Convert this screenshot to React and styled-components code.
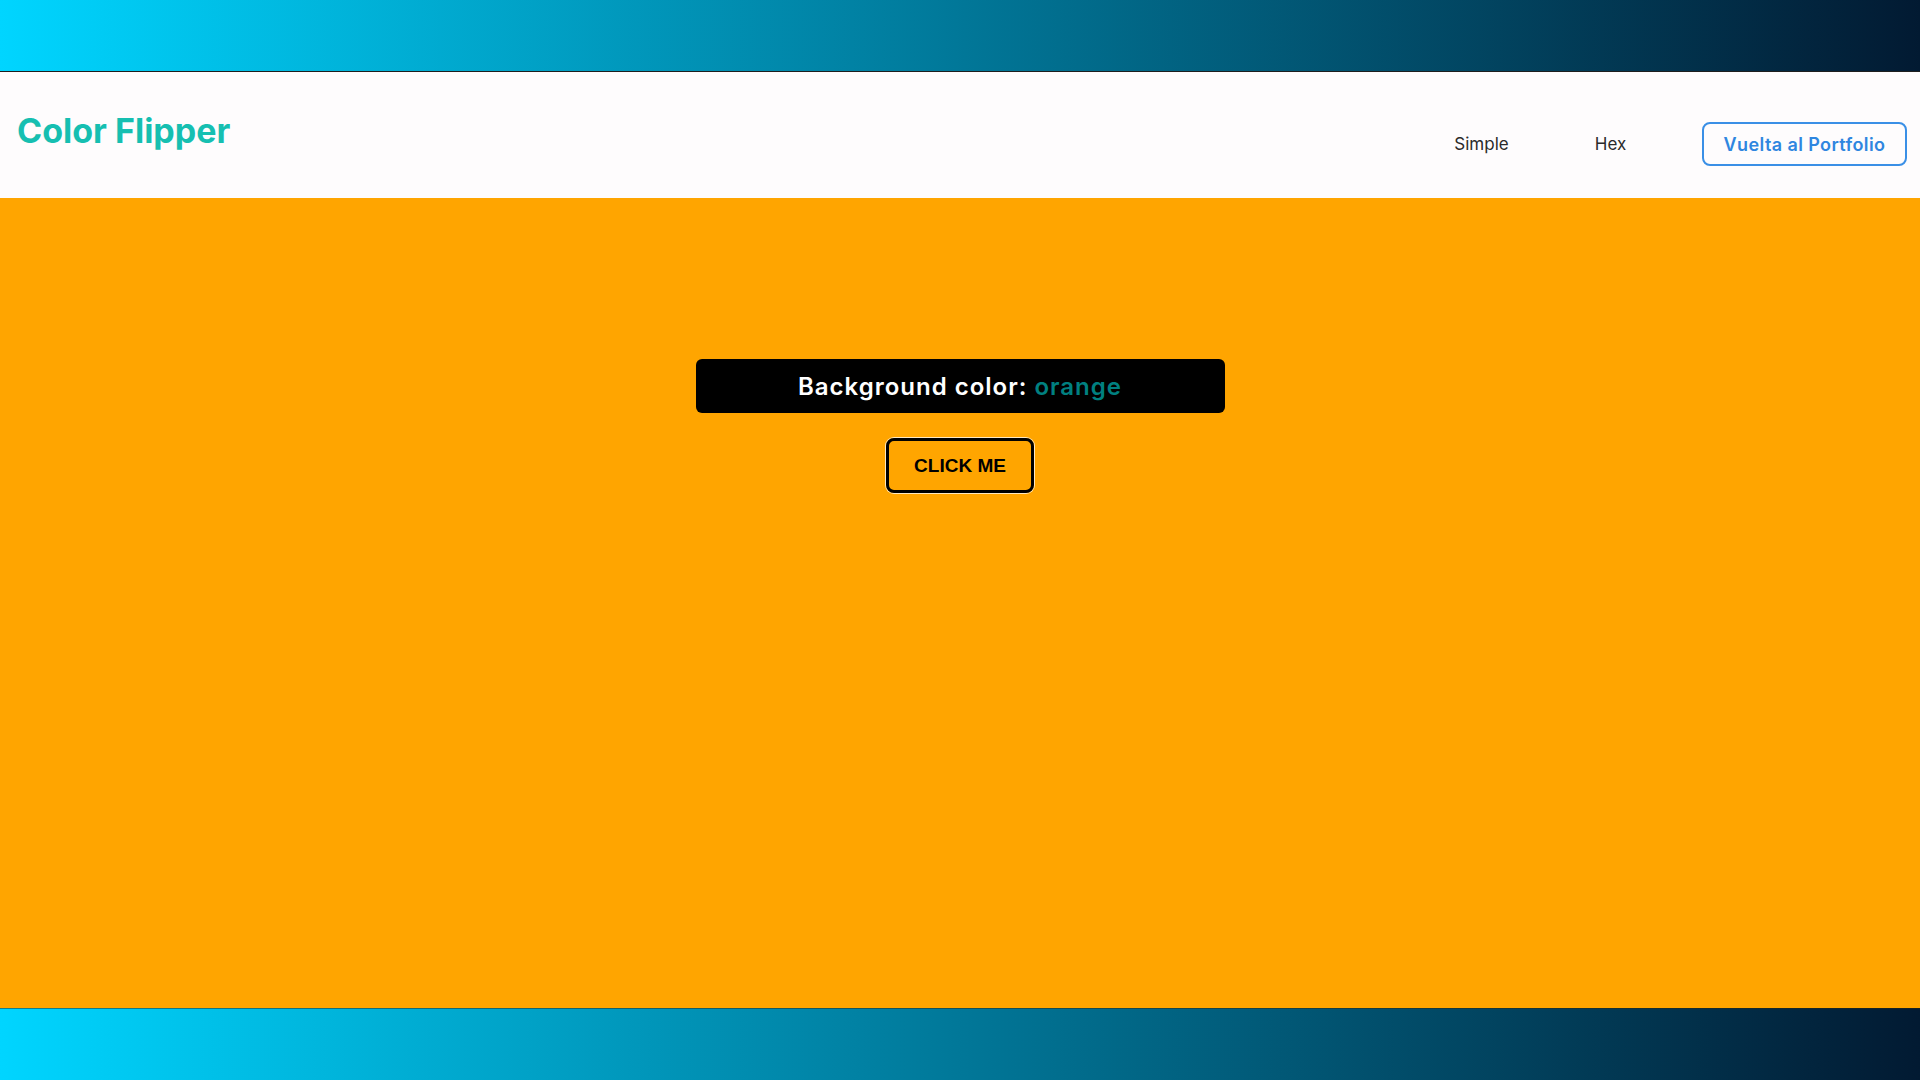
import React, { useState } from "react";
import styled, { createGlobalStyle } from "styled-components";

const GlobalStyle = createGlobalStyle`
  * { box-sizing: border-box; }
  body {
    margin: 0;
    font-family: Inter, "Open Sans", sans-serif;
    overflow: hidden;
  }
`;

const Page = styled.div`
  height: 100vh;
  display: grid;
  grid-template-rows: 72px 126px 1fr 72px;
`;

const GradientBar = styled.div`
  background: linear-gradient(90deg, #00d5ff 0%, #021a32 100%);
  border-${(p) => (p.$top ? "bottom" : "top")}: ${(p) => (p.$top ? "1.5px solid #1e1e1e" : "1px solid rgba(40,40,20,0.5)")};
`;

const Nav = styled.nav`
  display: flex;
  align-items: center;
  justify-content: space-between;
  padding: 18px 13px 0 17px;
  background: #fefcfd;
`;

const Logo = styled.h1`
  margin: 0 0 28px;
  font-size: 34px;
  font-weight: 700;
  color: #16bfb1;
`;

const NavLinks = styled.div`
  display: flex;
  align-items: center;
`;

const NavLink = styled.a`
  width: 129px;
  text-align: center;
  font-size: 17px;
  color: #2a2a2a;
  text-decoration: none;
  cursor: pointer;
`;

const PortfolioButton = styled.a`
  margin-left: 27px;
  width: 205px;
  height: 44px;
  display: flex;
  align-items: center;
  justify-content: center;
  border: 2px solid #3a8fe6;
  border-radius: 8px;
  color: #2f86e0;
  font-size: 18px;
  font-weight: 600;
  letter-spacing: 0.4px;
  text-decoration: none;
  cursor: pointer;
`;

const Main = styled.main`
  background: ${(p) => p.$color};
  display: flex;
  flex-direction: column;
  align-items: center;
  padding-top: 161px;
`;

const ColorBox = styled.h2`
  margin: 0;
  width: 529px;
  height: 54px;
  display: flex;
  align-items: center;
  justify-content: center;
  background: #000;
  border-radius: 6px;
  color: #fff;
  font-size: 24px;
  font-weight: 600;
  letter-spacing: 1px;
`;

const ColorName = styled.span`
  margin-left: 7px;
  color: #008080;
`;

const ClickButton = styled.button`
  margin-top: 25px;
  width: 148px;
  height: 55px;
  background: transparent;
  border: 3px solid #000;
  border-radius: 8px;
  box-shadow: 0 0 0 1px rgba(255, 255, 255, 0.75);
  font-family: "Liberation Sans", Arial, sans-serif;
  font-weight: 700;
  font-size: 19px;
  color: #000;
  cursor: pointer;
`;

const colors = ["orange", "red", "green", "rgba(133,122,200)", "#f15025"];

export default function App() {
  const [color, setColor] = useState("orange");

  const flip = () => {
    const next = colors[Math.floor(Math.random() * colors.length)];
    setColor(next);
  };

  return (
    <>
      <GlobalStyle />
      <Page>
        <GradientBar $top />
        <Nav>
          <Logo>Color Flipper</Logo>
          <NavLinks>
            <NavLink>Simple</NavLink>
            <NavLink>Hex</NavLink>
            <PortfolioButton>Vuelta al Portfolio</PortfolioButton>
          </NavLinks>
        </Nav>
        <Main $color={color}>
          <ColorBox>
            Background color:<ColorName>{color}</ColorName>
          </ColorBox>
          <ClickButton onClick={flip}>CLICK ME</ClickButton>
        </Main>
        <GradientBar />
      </Page>
    </>
  );
}
